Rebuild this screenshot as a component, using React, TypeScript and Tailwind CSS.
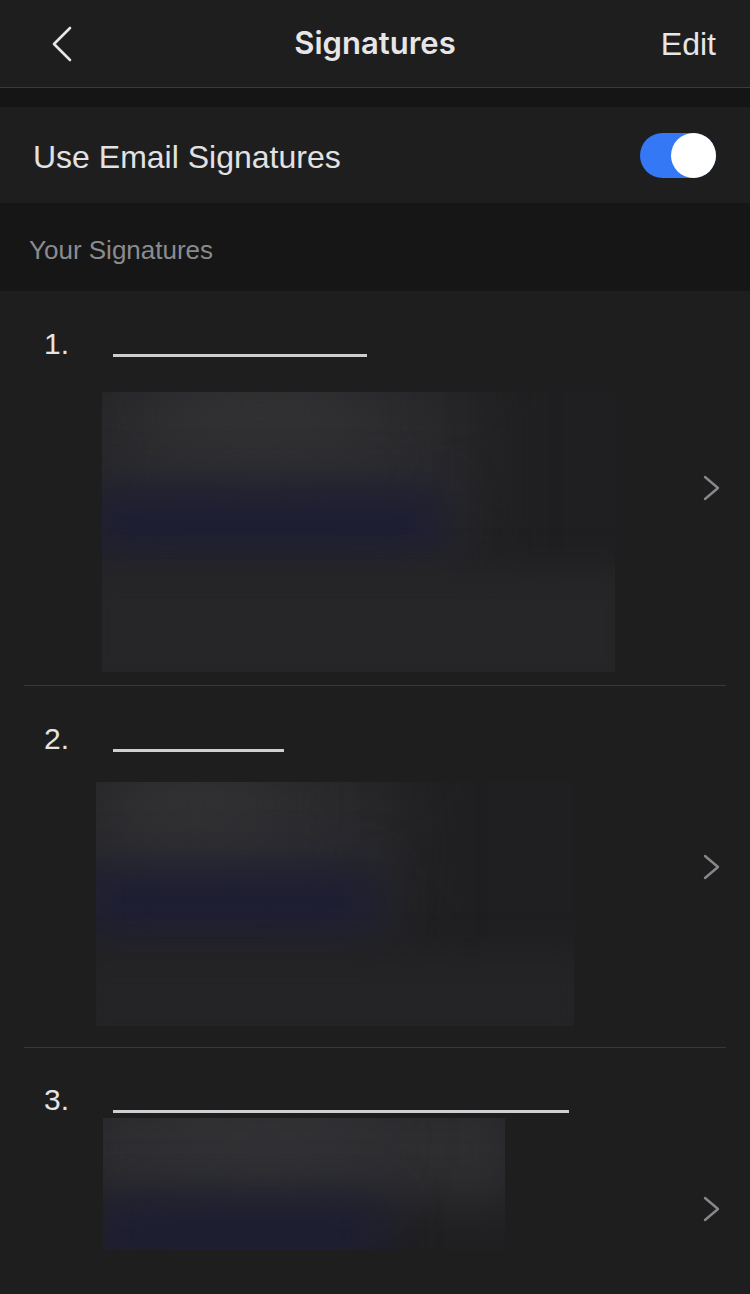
const font = { fontFamily: '"Liberation Sans", Arial, sans-serif' }

interface Signature {
  id: number
  lineWidth: number
  pt: string
  pb: string
  gap: string
  img: { left: string; w: string; h: string }
  kind: 'a' | 'b' | 'c'
}

const signatures: Signature[] = [
  { id: 1, lineWidth: 254, pt: 'pt-[35px]', pb: 'pb-[13px]', gap: 'mt-[30px]', img: { left: 'ml-[102px]', w: 'w-[513px]', h: 'h-[280px]' }, kind: 'a' },
  { id: 2, lineWidth: 171, pt: 'pt-[35px]', pb: 'pb-[21px]', gap: 'mt-[25px]', img: { left: 'ml-[96px]', w: 'w-[478px]', h: 'h-[244px]' }, kind: 'b' },
  { id: 3, lineWidth: 456, pt: 'pt-[34px]', pb: 'pb-[120px]', gap: 'mt-0', img: { left: 'ml-[103px]', w: 'w-[402px]', h: 'h-[132px]' }, kind: 'c' },
]

function BackChevron() {
  return (
    <svg width="22" height="36" viewBox="0 0 22 36" fill="none" className="ml-[17px]">
      <polyline points="19,2 3,18 19,34" stroke="#e6e6e8" strokeWidth="2.6" strokeLinecap="round" strokeLinejoin="round" />
    </svg>
  )
}

function RowChevron() {
  return (
    <svg width="17" height="26" viewBox="0 0 17 26" fill="none" className="mr-[30px] shrink-0">
      <polyline points="2,2 15,13 2,24" stroke="#88888c" strokeWidth="2.4" strokeLinecap="round" strokeLinejoin="round" />
    </svg>
  )
}

function BlurredPreview({ sig }: { sig: Signature }) {
  const { img, kind } = sig
  return (
    <div className={`relative overflow-hidden bg-[#1f1f21] ${img.left} ${img.w} ${img.h}`}>
      {kind === 'a' && (
        <>
          <div className="absolute -left-6 -top-6 h-[200px] w-[390px] bg-[#2c2c2f] blur-2xl" />
          <div className="absolute left-[60px] -top-4 h-[80px] w-[200px] bg-[#333335] blur-2xl" />
          <div className="absolute -left-4 top-[95px] h-[70px] w-[360px] bg-[#1d1d33] blur-xl" />
          <div className="absolute -left-6 top-[175px] h-[130px] w-[560px] bg-[#262628] blur-lg" />
        </>
      )}
      {kind === 'b' && (
        <>
          <div className="absolute -left-6 -top-6 h-[180px] w-[320px] bg-[#2c2c2f] blur-2xl" />
          <div className="absolute left-[20px] -top-4 h-[80px] w-[160px] bg-[#333335] blur-2xl" />
          <div className="absolute -left-4 top-[85px] h-[70px] w-[300px] bg-[#1d1d33] blur-xl" />
          <div className="absolute -left-6 top-[170px] h-[100px] w-[520px] bg-[#242426] blur-lg" />
        </>
      )}
      {kind === 'c' && (
        <>
          <div className="absolute -left-6 -top-6 h-[110px] w-[440px] bg-[#2e2e31] blur-xl" />
          <div className="absolute left-[60px] -top-4 h-[70px] w-[200px] bg-[#333336] blur-2xl" />
          <div className="absolute -left-4 top-[80px] h-[70px] w-[300px] bg-[#1e1e34] blur-xl" />
        </>
      )}
    </div>
  )
}

function SignatureRow({ sig, last }: { sig: Signature; last: boolean }) {
  return (
    <div>
      <div className="flex items-center">
        <div className={`flex-1 ${sig.pt} ${sig.pb}`}>
          <div className="flex items-start pl-[44px]">
            <span className="w-[69px] text-[30px] leading-[36px] text-[#e4e4e6]">{sig.id}.</span>
            <div className="mt-[28px] h-[3px] bg-[#cfcfd1]" style={{ width: sig.lineWidth }} />
          </div>
          <div className={sig.gap}>
            <BlurredPreview sig={sig} />
          </div>
        </div>
        <RowChevron />
      </div>
      {!last && <div className="mx-[24px] h-px bg-[#38383a]" />}
    </div>
  )
}

export default function App() {
  return (
    <div className="min-h-[1294px] w-[750px] overflow-hidden bg-[#1e1e1e]" style={font}>
      <header className="grid h-[88px] grid-cols-[1fr_auto_1fr] items-center border-b border-[#3a3a3c] bg-[#1e1e1e] px-[34px]">
        <div className="flex">
          <BackChevron />
        </div>
        <h1
          className="text-[31px] font-semibold text-[#e6e6e8]"
          style={{ fontFamily: 'Inter, "Liberation Sans", sans-serif' }}
        >
          Signatures
        </h1>
        <div className="flex justify-end">
          <button type="button" className="text-[32px] text-[#e6e6e8]">
            Edit
          </button>
        </div>
      </header>

      <div className="h-[19px] bg-[#151515]" />

      <div className="flex h-[96px] items-center justify-between bg-[#1e1e1e] pl-[33px] pr-[34px]">
        <span className="pt-[4px] text-[32px] text-[#e2e2e4]">Use Email Signatures</span>
        <div className="relative h-[45px] w-[76px] rounded-full bg-[#3478f6]">
          <div className="absolute right-0 top-0 h-[45px] w-[45px] rounded-full bg-white" />
        </div>
      </div>

      <div className="flex h-[88px] items-center bg-[#161616] pl-[29px] pt-[6px]">
        <span className="text-[26px] text-[#8b8b8f]">Your Signatures</span>
      </div>

      <div className="bg-[#1e1e1e]">
        {signatures.map((s, i) => (
          <SignatureRow key={s.id} sig={s} last={i === signatures.length - 1} />
        ))}
      </div>
    </div>
  )
}
